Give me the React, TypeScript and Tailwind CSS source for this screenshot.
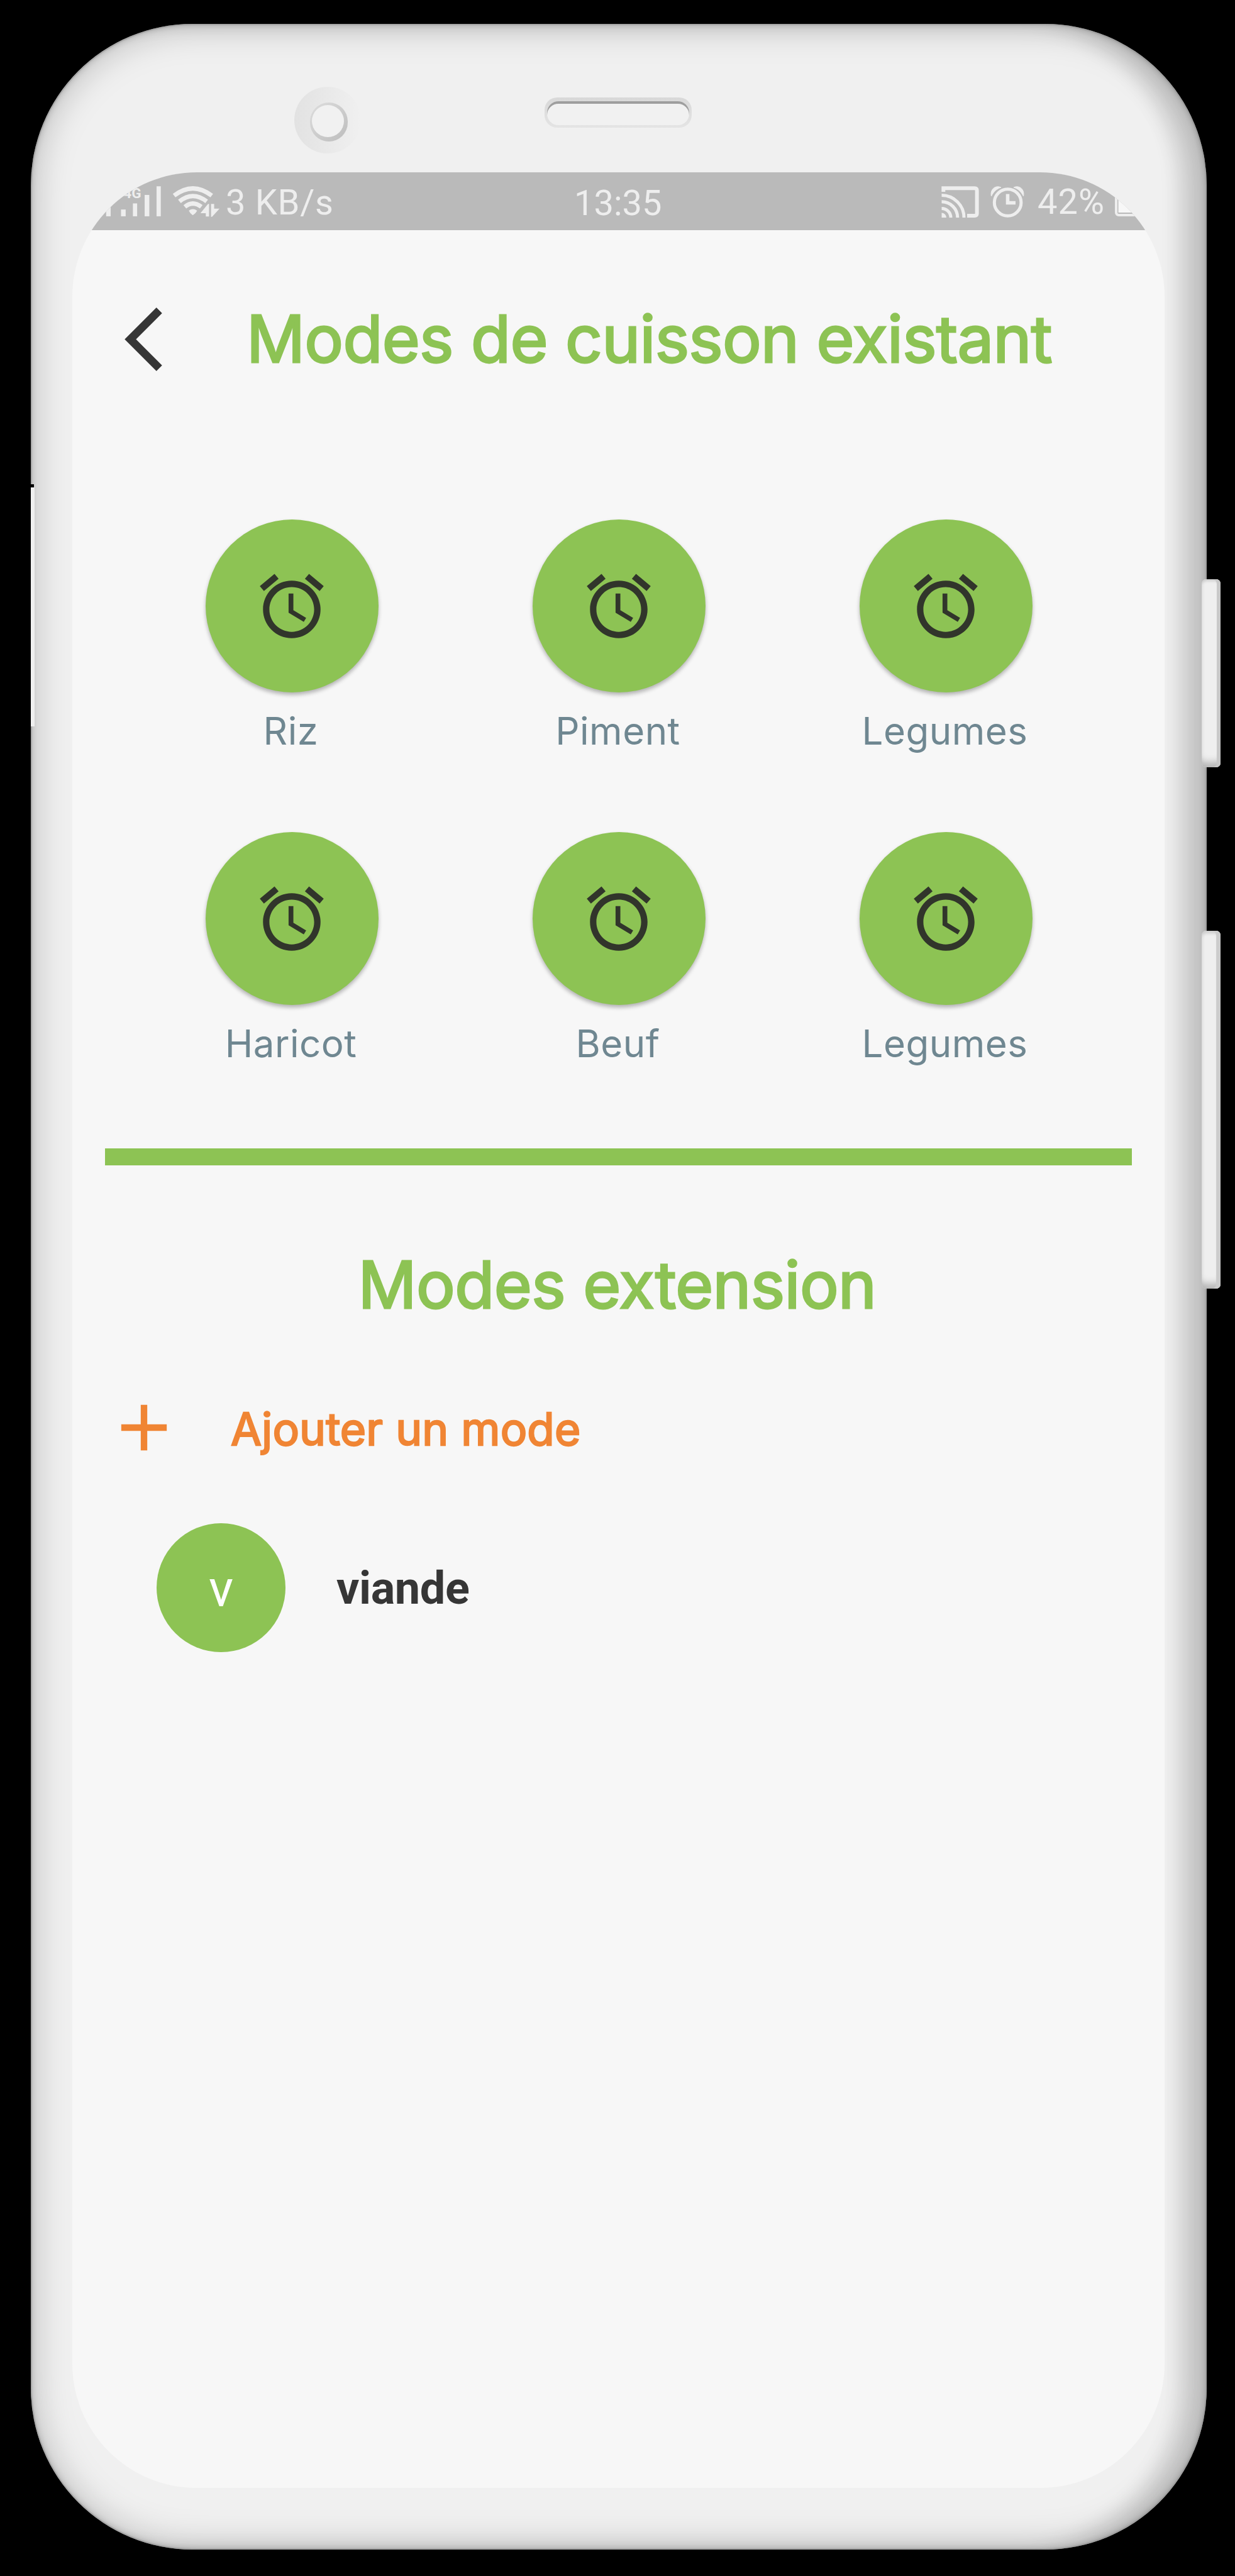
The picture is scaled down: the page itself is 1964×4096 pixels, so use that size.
const MODES = ["Riz", "Piment", "Legumes", "Haricot", "Beuf", "Legumes"];

function AlarmIcon() {
  return (
    <svg viewBox="0 0 24 24" className="size-[122px] fill-[#31352b]">
      <path d="M22 5.72l-4.6-3.86-1.29 1.53 4.6 3.86L22 5.72zM7.88 3.39L6.6 1.86 2 5.71l1.29 1.53 4.59-3.85zM12.5 8H11v6l4.75 2.85.75-1.23-4-2.37V8zM12 4c-4.97 0-9 4.03-9 9s4.02 9 9 9c4.97 0 9-4.03 9-9s-4.03-9-9-9zm0 16c-3.87 0-7-3.13-7-7s3.13-7 7-7 7 3.13 7 7-3.13 7-7 7z" />
    </svg>
  );
}

function SignalAndWifi() {
  return (
    <svg viewBox="0 0 900 422" className="-mt-[3px] ml-[41px] h-[95px] w-[203px] shrink-0 fill-[#eeeeee]">
      <rect x="56" y="112" width="32" height="212" />
      <text x="304" y="195" textAnchor="end" className="font-['Roboto'] text-[100px] font-bold">
        4G
      </text>
      <rect x="161" y="276" width="33" height="48" />
      <rect x="245" y="233" width="30" height="91" />
      <rect x="328" y="173" width="33" height="151" />
      <rect x="412" y="112" width="30" height="212" />
      <g fill="none" stroke="#eeeeee" strokeWidth="31">
        <path d="M536 178 Q668 76 802 178" />
        <path d="M574 219 Q668 143 766 219" />
        <path d="M612 257 Q668 211 728 257" />
      </g>
      <path d="M640 284 Q668 262 699 284 Q690 302 668 317 Q648 302 640 284z" />
      <path d="M722 302 L776 236 H783 V325 H760 V302z" />
      <path d="M797 237 H819 V270 H857 L804 328 H797z" />
    </svg>
  );
}

function CastAndAlarm() {
  return (
    <svg viewBox="0 0 162 92" className="h-[92px] w-[162px] shrink-0" fill="none" stroke="#eeeeee">
      <path d="M16.3 31 V25.3 H66 Q69.6 25.3 69.6 29 V65.5 Q69.6 69 66 69 H54" strokeWidth="6" />
      <path d="M13.5 36.5 A35.5 35.5 0 0 1 49 72" strokeWidth="5" />
      <path d="M13.5 46.7 A25.3 25.3 0 0 1 38.8 72" strokeWidth="5" />
      <path d="M13.5 57.5 A14.5 14.5 0 0 1 28 72" strokeWidth="5" />
      <path d="M13.5 64.5 A7.5 7.5 0 0 1 21 72 H13.5z" fill="#eeeeee" stroke="none" />
      <circle cx="118.6" cy="48" r="21.3" strokeWidth="5" />
      <path d="M118.5 34.5 V48.5 H131" strokeWidth="5.6" />
      <path
        d="M92.5 38 C90 28 98.5 19.5 108 24 C101 26 96 31 92.5 38z M143.5 38 C146 28 137.5 19.5 128 24 C135 26 140 31 143.5 38z"
        fill="#eeeeee"
        strokeWidth="1"
      />
    </svg>
  );
}

function StatusBar() {
  return (
    <div className="flex h-[92px] shrink-0 bg-[#bababa] font-['Roboto',sans-serif] text-[56px] leading-[92px] text-[#eeeeee]">
      <div className="flex w-[798px] shrink-0">
        <SignalAndWifi />
        <span className="mt-0.5 tracking-[0.7px] whitespace-nowrap">3 KB/s</span>
      </div>
      <span className="mt-[3px]">13:35</span>
      <div className="ml-auto flex w-[368px]">
        <CastAndAlarm />
        <span className="ml-[4px] mt-px w-[122px] tracking-[1px]">42%</span>
        <svg viewBox="0 0 80 92" className="h-[92px] w-[80px] shrink-0">
          <rect x="3" y="18" width="70" height="50" rx="4" fill="none" stroke="#eeeeee" strokeWidth="4" />
          <rect x="6.5" y="21" width="64" height="43" fill="#f7f7f7" />
        </svg>
      </div>
    </div>
  );
}

function Screen() {
  return (
    <div className="ml-[66px] flex h-[3682px] w-[1737px] flex-col overflow-hidden rounded-[198px] bg-[#f7f7f7] font-['Inter',sans-serif]">
      <StatusBar />
      <header className="flex h-[347px] items-center pl-[83px]">
        <svg viewBox="0 2.1 11.67 19.8" className="h-[101px] w-[60px] fill-[#363636]">
          <path d="M11.67 3.87L9.9 2.1 0 12l9.9 9.9 1.77-1.77L3.54 12z" />
        </svg>
        <h1 className="-mt-[2px] ml-[134px] text-[103px] leading-none font-normal tracking-[-0.7px] whitespace-nowrap text-[#8dc354] [-webkit-text-stroke:3px_#8dc354]">
          Modes de cuisson existant
        </h1>
      </header>

      <div className="mt-[113px] ml-[89px] grid w-[1560px] grid-cols-3 gap-y-[131px]">
        {MODES.map((name, i) => (
          <div key={i} className="flex flex-col items-center gap-[31px]">
            <div className="flex size-[275px] items-center justify-center rounded-full bg-[#8dc354] shadow-[0_4px_6px_rgba(0,0,0,0.28)]">
              <AlarmIcon />
            </div>
            <span className="-ml-[3px] text-[60px] leading-none tracking-[0.5px] text-[#6f8791]">{name}</span>
          </div>
        ))}
      </div>

      <div className="mt-[137px] ml-[52px] h-[27px] w-[1633px] bg-[#8dc354]" />

      <h2 className="mt-[138px] -ml-[4px] h-[105px] text-center text-[103px] leading-[103px] font-normal tracking-[-0.6px] text-[#8dc354] [-webkit-text-stroke:3px_#8dc354]">
        Modes extension
      </h2>

      <div className="mt-[113px] ml-[52px] flex h-[124px] items-center text-[#f08534]">
        <svg viewBox="0 0 24 24" className="size-[124px] -translate-y-px fill-current">
          <path d="M19 13h-6v6h-2v-6H5v-2h6V5h2v6h6v2z" />
        </svg>
        <span className="mt-0.5 ml-[76px] text-[71px] leading-none font-normal tracking-[0.1px] [-webkit-text-stroke:2.4px_#f08534]">
          Ajouter un mode
        </span>
      </div>

      <div className="mt-[89px] ml-[134px] flex items-center font-['Roboto',sans-serif]">
        <div className="flex size-[205px] items-center justify-center rounded-full bg-[#8dc354] pt-[3px] text-[81px] leading-none text-white">
          v
        </div>
        <span className="mt-0.5 ml-[81px] text-[72px] leading-none font-bold tracking-[-0.4px] text-[#363636]">
          viande
        </span>
      </div>
    </div>
  );
}

export default function App() {
  return (
    <div className="h-[4096px] w-[1964px] overflow-hidden bg-black pt-[38px] pl-[49px]">
      <div className="relative h-[4016px] w-[1870px]">
        <div className="h-full rounded-[257px] bg-[#f0f0f0] shadow-[inset_0_0_0_2px_rgba(150,150,150,0.5),inset_0_0_8px_2px_rgba(0,0,0,0.15),inset_0_0_60px_rgba(0,0,0,0.26),inset_-45px_0_30px_rgba(0,0,0,0.11)]">
          <div className="flex h-[236px] items-start">
            <div className="mt-[100px] ml-[419px] flex size-[106px] items-center justify-center rounded-full bg-linear-to-r from-[#e2e2e2] to-[#f0f0f0]">
              <div className="flex h-[62px] w-[60px] translate-x-[2px] translate-y-[3px] items-center justify-center rounded-full bg-linear-135 from-[#dddddd] to-[#bdbdbd]">
                <div className="size-[51px] -translate-x-[2px] -translate-y-[2px] rounded-full bg-[#f1f1f1]" />
              </div>
            </div>
            <div className="mt-[117px] ml-[292px] h-[48px] w-[234px] rounded-[20px] bg-linear-to-b from-[#d8d8d8] to-[#e4e4e4] px-1 pt-[6px] pb-[4px]">
              <div className="h-full rounded-[18px] bg-[#f1f1f1] shadow-[inset_0_4px_0_#9e9e9e]" />
            </div>
          </div>
          <Screen />
        </div>

        {/* Hardware buttons on the sides of the body */}
        <div className="absolute top-[732px] left-0 h-[5px] w-[5px] bg-black" />
        <div className="absolute top-[737px] left-0 h-[380px] w-[6px] bg-[#efefef]" />
        <div className="absolute top-[883px] left-[1862px] h-[299px] w-[30px] rounded-[7px] bg-[#efefef] shadow-[inset_-6px_0_1px_#c8c8c8,inset_0_-14px_12px_-6px_#b4b4b4,inset_0_4px_4px_-1px_#cccccc]" />
        <div className="absolute top-[1442px] left-[1862px] h-[569px] w-[30px] rounded-[7px] bg-[#efefef] shadow-[inset_-7px_0_1px_#cccccc,inset_0_-14px_12px_-6px_#b4b4b4,inset_0_5px_5px_-1px_#cccccc]" />
      </div>
    </div>
  );
}
